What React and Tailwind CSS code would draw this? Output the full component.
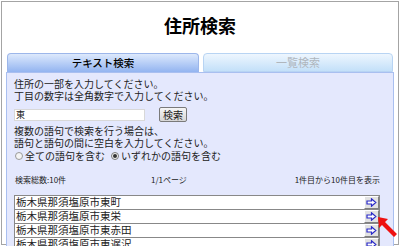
import React from "react";

const rows = [
  "栃木県那須塩原市東町",
  "栃木県那須塩原市東栄",
  "栃木県那須塩原市東赤田",
  "栃木県那須塩原市東遅沢",
];

function ArrowButton() {
  return (
    <div className="flex h-[13px] w-[15px] shrink-0 items-center justify-center border border-t-white border-l-white border-r-[#808080] border-b-[#808080] bg-[#e2e2e2]">
      <svg width="11" height="9" viewBox="0 0 11 9">
        <path d="M1 3 H5.5 V0.8 L9.8 4.5 L5.5 8.2 V6 H1 Z" fill="#fff" stroke="#2a2ac8" strokeWidth="1.2" />
      </svg>
    </div>
  );
}

export default function App() {
  return (
    <div
      className="relative h-[246px] w-[400px] overflow-hidden bg-white p-px text-black"
      style={{ fontFamily: '"Noto Sans CJK JP", "Noto Sans", sans-serif' }}
    >
      <div className="h-[244px] border border-[#a4a4a4] bg-white">
        {/* タイトル */}
        <div className="flex h-[44px] items-center justify-center pt-[1px] text-[18px] font-bold leading-none">
          住所検索
        </div>

        <div className="px-[4px] pt-[7px]">
          {/* タブ */}
          <div className="flex gap-[4px] px-[1px]">
            <div className="flex h-[19px] w-[192px] items-center justify-center rounded-t-[4px] border border-b-0 border-[#9cb6ea] bg-gradient-to-b from-[#dde9fc] to-[#93b4f0] text-[10.5px] font-medium leading-none">
              テキスト検索
            </div>
            <div className="flex h-[19px] flex-1 items-center justify-center rounded-t-[4px] border border-[#b8d4f3] bg-gradient-to-b from-[#eef6fe] to-[#c3e0f9] text-[11px] leading-none text-[#b0b6bd]">
              一覧検索
            </div>
          </div>

          {/* パネル */}
          <div className="h-[200px] border border-[#a9bff0] bg-[#e4e8fd] pl-[7px] pr-[13px] pt-[5px] text-[10px] text-[#222]">
            <div className="leading-[12px]">住所の一部を入力してください。</div>
            <div className="leading-[12px]">丁目の数字は全角数字で入力してください。</div>

            <div className="mt-[5px] flex items-center">
              <div className="flex h-[12px] w-[131px] items-center border border-[#d8d8d8] bg-white pl-[1px] text-[9px] leading-none">
                東
              </div>
              <button className="ml-[14px] flex h-[15px] w-[28px] items-center justify-center rounded-[2px] border border-[#7a7a7a] bg-gradient-to-b from-[#f6f6f6] to-[#d6d6d6] text-[10px] leading-none">
                検索
              </button>
            </div>

            <div className="mt-[3px] leading-[12px]">複数の語句で検索を行う場合は、</div>
            <div className="leading-[12px]">語句と語句の間に空白を入力してください。</div>
            <div className="flex items-center leading-[13px]">
              <span className="ml-[1px] mr-[2px] inline-block h-[8px] w-[8px] rounded-full border border-[#9a9a9a] bg-[#f4f4f4]" />
              <span>全ての語句を含む</span>
              <span className="ml-[6px] mr-[2px] flex h-[8px] w-[8px] items-center justify-center rounded-full border border-[#7a7a7a] bg-[#f4f4f4]">
                <span className="h-[4px] w-[4px] rounded-full bg-[#333]" />
              </span>
              <span>いずれかの語句を含む</span>
            </div>

            <div className="mt-[13px] flex items-center text-[8px] leading-[10px]">
              <span className="w-[137px] pl-[1px]">検索総数:10件</span>
              <span>1/1ページ</span>
              <span className="ml-auto">1件目から10件目を表示</span>
            </div>

            <div className="mt-[10px] border-t border-[#888]">
              {rows.map((r) => (
                <div
                  key={r}
                  className="flex h-[14px] items-center border-b border-l border-r border-[#888] bg-white pl-[1px] text-[10.5px] leading-none"
                >
                  <span className="flex-1">{r}</span>
                  <ArrowButton />
                </div>
              ))}
            </div>
          </div>
        </div>
      </div>

      {/* 赤い矢印 */}
      <svg className="absolute left-[374px] top-[213px]" width="26" height="28" viewBox="0 0 26 28">
        <path d="M4 4 L14 6 L11 9 L23 21 L20 24 L8 12 L5 15 Z" fill="#ee1111" />
      </svg>
    </div>
  );
}
